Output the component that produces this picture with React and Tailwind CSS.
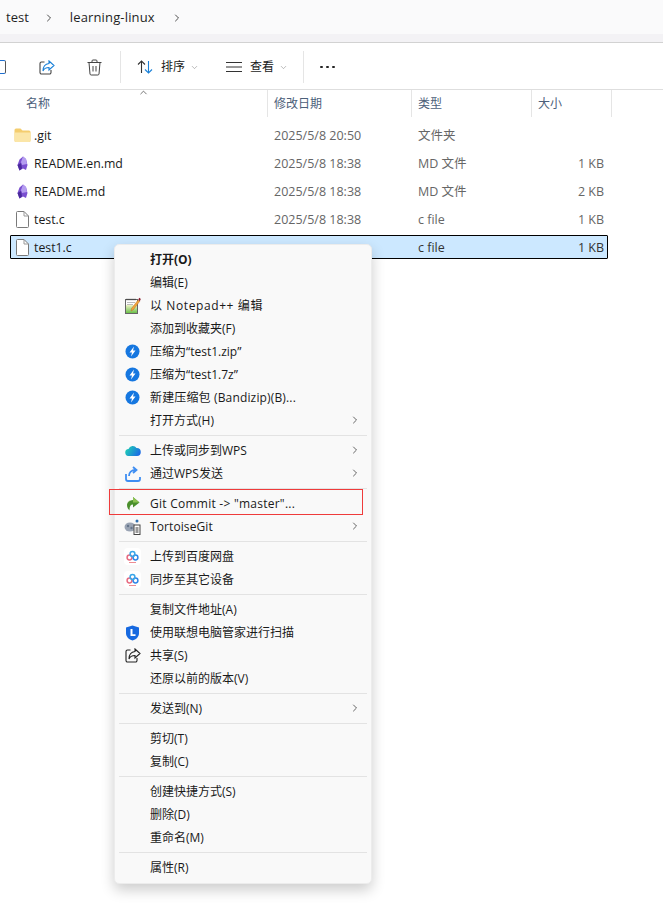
import React from 'react';
import { ChevronRight, ChevronDown, ChevronUp } from 'lucide-react';

const FONT = '"Open Sans", "Noto Sans CJK SC", sans-serif';

const FolderIcon = () => (
  <svg width="17" height="15" viewBox="0 0 17 15">
    <path d="M0.500 2a1.500 1.500 0 0 1 1.500-1.500h4.500l2 2H15a1.500 1.500 0 0 1 1.500 1.500v8.500a1.500 1.500 0 0 1-1.500 1.500H2a1.500 1.500 0 0 1-1.500-1.500z" fill="#f4cd6e" />
    <path d="M0.500 4.500h16v8a1.500 1.500 0 0 1-1.500 1.500H2a1.500 1.500 0 0 1-1.500-1.500z" fill="#fbe6a8" />
  </svg>
);

const ObsidianIcon = () => (
  <svg width="11" height="15" viewBox="0 0 11 15">
    <path d="M6 0.500 9 3l1.500 6-1.500 5L6 12.500 2.500 14.500 0.500 9 2.500 3.500z" fill="#7a4fd0" />
    <path d="M6 0.500 9 3l1 5-5 1-1-3z" fill="#b59df0" />
    <path d="M0.500 9 4 7l1 5.500-2.500 2z" fill="#4a2a9c" />
  </svg>
);

const FileIcon = () => (
  <svg width="13" height="17" viewBox="0 0 13 17">
    <path d="M0.500 1.500a1 1 0 0 1 1-1h6.500L12.500 5v10.500a1 1 0 0 1-1 1h-10a1 1 0 0 1-1-1z" fill="#fff" stroke="#7a7a7a" />
    <path d="M8 0.500V5h4.500" fill="none" stroke="#9a9a9a" />
  </svg>
);

const ShareOutline = ({ box = '#333', arrow = '#333' }) => (
  <svg width="16" height="15" viewBox="0 0 16 15" fill="none" strokeWidth="1.100">
    <path d="M5.500 2H2.500a1.500 1.500 0 0 0-1.500 1.500v9A1.500 1.500 0 0 0 2.500 14h8a1.500 1.500 0 0 0 1.500-1.500V10" stroke={box} />
    <path d="M10 1l5 4.500L10 10V7.500C7 7.500 5 8.500 4 11c0-4 2-7 6-7.500z" stroke={arrow} />
  </svg>
);

const TrashIcon = () => (
  <svg width="15" height="17" viewBox="0 0 15 17" fill="none" stroke="#444" strokeWidth="1">
    <path d="M0.500 3.500h14M5 3.500V2a1 1 0 0 1 1-1h3a1 1 0 0 1 1 1v1.500" />
    <path d="M2 3.500l1 11.500a1.200 1.200 0 0 0 1.200 1h6.600a1.200 1.200 0 0 0 1.200-1l1-11.500" />
    <path d="M6 7v5.500M9 7v5.500" />
  </svg>
);

const BandizipIcon = () => (
  <svg width="15" height="15" viewBox="0 0 15 15">
    <circle cx="7.500" cy="7.500" r="7" fill="#1677e0" />
    <path d="M9 2.500 4.500 8.500h2.500L6 12.500l4.500-6H8z" fill="#fff" />
  </svg>
);

const NotepadIcon = () => (
  <svg width="16" height="17" viewBox="0 0 16 17">
    <defs>
      <linearGradient id="npGreen" x1="0" x2="0" y1="0" y2="1">
        <stop offset="0" stopColor="#eef3c8" />
        <stop offset="1" stopColor="#6cc04a" />
      </linearGradient>
    </defs>
    <rect x="0.500" y="2.500" width="12" height="14" fill="#fff" stroke="#666" />
    <rect x="1" y="8" width="11" height="8" fill="url(#npGreen)" />
    <path d="M1.500 2.500h10" stroke="#333" strokeWidth="1.500" strokeDasharray="1 1" />
    <path d="M2 5.500h8M2 7.500h6" stroke="#bbb" />
    <path d="M13 3 6.500 11.500 6 14l2.300-1.200L14.800 4.300z" fill="#f2a33a" stroke="#a8621c" strokeWidth="0.400" />
    <path d="M13.300 2.600 14.300 0.800 15.800 2 14.800 4.300z" fill="#8a1c2c" />
  </svg>
);

const WpsCloudIcon = () => (
  <svg width="16" height="11" viewBox="0 0 16 11">
    <defs>
      <linearGradient id="wpsCloud" x1="0" x2="1" y1="0.300" y2="0.700">
        <stop offset="0" stopColor="#1fd0b4" />
        <stop offset="1" stopColor="#1a68e6" />
      </linearGradient>
    </defs>
    <path d="M4 11a3.500 3.500 0 0 1-.5-7A4.500 4.500 0 0 1 11.500 3 4 4 0 0 1 12 11z" fill="url(#wpsCloud)" />
  </svg>
);

const WpsSendIcon = () => (
  <svg width="16" height="16" viewBox="0 0 16 16" fill="none" stroke="#3f8ef2" strokeWidth="1.800">
    <path d="M1 8v5a2 2 0 0 0 2 2h10a2 2 0 0 0 2-2v-2" />
    <path d="M4 10c0-3.500 2.500-6 6.500-6M8 1l3.500 3L8 7" />
  </svg>
);

const GitCommitIcon = () => (
  <svg width="15" height="15" viewBox="0 0 15 15">
    <path d="M8 1l6.500 5.500L8 11.500V8.500C5.500 8.500 4.500 10.500 4.500 14.500 1 11 0.500 5 8 4z" fill="#4a8f2c" />
    <path d="M8 1l6.500 5.500H8V4C4.500 4.300 3 5.500 2 8 2.500 5.500 4.500 4 8 4z" fill="#8cc152" />
  </svg>
);

const TortoiseIcon = () => (
  <svg width="17" height="16" viewBox="0 0 17 16">
    <ellipse cx="6" cy="8" rx="5.500" ry="4.500" fill="#9aa4b4" />
    <circle cx="4" cy="7" r="1.200" fill="#64748b" />
    <circle cx="7.500" cy="9" r="1.200" fill="#64748b" />
    <rect x="10" y="6" width="6" height="9.500" fill="#fff" stroke="#444" />
    <path d="M11.500 9h3M11.500 11h3M11.500 13h3" stroke="#333" />
    <circle cx="13" cy="2" r="1.500" fill="#2f6fb0" />
  </svg>
);

const BaiduIcon = () => (
  <svg width="17" height="17" viewBox="0 0 17 17">
    <rect width="17" height="17" rx="4" fill="#ffffff" />
    <circle cx="5.500" cy="9.500" r="2.400" fill="none" stroke="#e86a80" strokeWidth="1.500" />
    <circle cx="11.500" cy="9.500" r="2.400" fill="none" stroke="#2f86e8" strokeWidth="1.500" />
    <circle cx="8.500" cy="6" r="2.400" fill="none" stroke="#3aa6e8" strokeWidth="1.500" />
    <path d="M5 14.500h7" stroke="#e8707a" strokeWidth="0.800" />
  </svg>
);

const LenovoIcon = () => (
  <svg width="15" height="16" viewBox="0 0 15 16">
    <path d="M7.500 0.500 14 2.500V8c0 4-3 6.500-6.500 7.500C4 14.500 1 12 1 8V2.500z" fill="#1769e0" />
    <path d="M5.500 4v7h5V9.300H7.500V4z" fill="#fff" />
  </svg>
);

const FILES = [
  { name: '.git', icon: <FolderIcon />, date: '2025/5/8 20:50', type: '文件夹', size: '' },
  { name: 'README.en.md', icon: <ObsidianIcon />, date: '2025/5/8 18:38', type: 'MD 文件', size: '1 KB' },
  { name: 'README.md', icon: <ObsidianIcon />, date: '2025/5/8 18:38', type: 'MD 文件', size: '2 KB' },
  { name: 'test.c', icon: <FileIcon />, date: '2025/5/8 18:38', type: 'c file', size: '1 KB' },
  // date cell sits under the context menu in the screenshot
  { name: 'test1.c', icon: <FileIcon />, date: '', type: 'c file', size: '1 KB', selected: true },
];

// null = separator
const MENU = [
  { label: '打开(O)', bold: true },
  { label: '编辑(E)' },
  { label: '以 Notepad++ 编辑', icon: <NotepadIcon />, track: 'tracking-[0.6px]' },
  { label: '添加到收藏夹(F)' },
  { label: '压缩为“test1.zip”', icon: <BandizipIcon /> },
  { label: '压缩为“test1.7z”', icon: <BandizipIcon /> },
  { label: '新建压缩包 (Bandizip)(B)...', icon: <BandizipIcon />, track: 'tracking-[0.15px]' },
  { label: '打开方式(H)', arrow: true },
  null,
  { label: '上传或同步到WPS', icon: <WpsCloudIcon />, arrow: true },
  { label: '通过WPS发送', icon: <WpsSendIcon />, arrow: true },
  null,
  { label: 'Git Commit -> "master"...', icon: <GitCommitIcon />, track: 'tracking-[0.25px]' },
  { label: 'TortoiseGit', icon: <TortoiseIcon />, arrow: true, track: 'tracking-[0.1px]' },
  null,
  { label: '上传到百度网盘', icon: <BaiduIcon /> },
  { label: '同步至其它设备', icon: <BaiduIcon /> },
  null,
  { label: '复制文件地址(A)' },
  { label: '使用联想电脑管家进行扫描', icon: <LenovoIcon /> },
  { label: '共享(S)', icon: <ShareOutline box="#222" arrow="#222" /> },
  { label: '还原以前的版本(V)' },
  null,
  { label: '发送到(N)', arrow: true },
  null,
  { label: '剪切(T)' },
  { label: '复制(C)' },
  null,
  { label: '创建快捷方式(S)' },
  { label: '删除(D)' },
  { label: '重命名(M)' },
  null,
  { label: '属性(R)' },
];

const MenuRow = ({ item }) => (
  <div className="relative flex h-[23px] items-center text-[12px] text-[#1a1a1a]">
    <div className="flex w-[35px] shrink-0 justify-center">{item.icon}</div>
    <span className={`${item.bold ? 'font-bold' : ''} ${item.track || ''}`}>{item.label}</span>
    {item.arrow && <ChevronRight className="absolute right-[10px] top-[5px] text-[#333]" size={12} strokeWidth={1.5} />}
  </div>
);

const ContextMenu = () => (
  <div className="absolute left-[114px] top-[244px] w-[258px] rounded-[5px] border border-[#ececec] bg-[#f9f9f9] pt-[3px] pb-[4px] shadow-[0_6px_14px_rgba(0,0,0,0.2)]">
    {MENU.map((item, i) =>
      item ? (
        <MenuRow key={i} item={item} />
      ) : (
        <div key={i} className="flex h-[7px] items-center px-[4px]">
          <div className="h-px w-full bg-[#e3e3e3]" />
        </div>
      )
    )}
  </div>
);

const FileRow = ({ file }) => {
  const meta = file.selected ? 'text-[#333]' : 'text-[#666]';
  return (
    <div className={`flex h-[24px] items-center rounded-[1px] text-[12.500px] ${file.selected ? 'border border-black bg-[#cce8ff]' : 'border border-transparent'}`}>
      <div className="flex w-[22px] shrink-0 justify-center">{file.icon}</div>
      <div className="ml-[1px] w-[240px] shrink-0 pt-[2px] text-[12.300px] text-[#1a1a1a]">{file.name}</div>
      <div className={`w-[144px] shrink-0 pt-[2px] ${meta}`}>{file.date}</div>
      <div className={`w-[120px] shrink-0 pt-[2px] ${meta}`}>{file.type}</div>
      <div className={`flex-1 pr-[3px] pt-[2px] text-right ${meta}`}>{file.size}</div>
    </div>
  );
};

export default function App() {
  return (
    <div className="relative h-[910px] w-[663px] overflow-hidden bg-white" style={{ fontFamily: FONT }}>
      {/* address bar */}
      <div className="flex h-[43px] flex-col border-b border-[#d2d2d2] bg-[#f3f2f5]">
        <div className="flex h-[34px] items-center gap-[15px] bg-[#fafafb] pl-[6px] pt-[2px] text-[13px] text-[#1f1f1f]">
          <span>test</span>
          <ChevronRight size={12} strokeWidth={1.6} className="-ml-[1px] text-[#222]" />
          <span className="tracking-[0.15px]">learning-linux</span>
          <ChevronRight size={12} strokeWidth={1.6} className="ml-[1px] text-[#222]" />
        </div>
      </div>

      {/* toolbar */}
      <div className="flex h-[47px] items-center border-b border-[#dedede] bg-white pt-[2px] text-[12px] text-[#1a1a1a]">
        <div className="flex h-[14px] w-[6px] rounded-r-[2px] border-y border-r border-y-[#1f6fd0] border-r-[#555]" />
        <div className="ml-[33px]"><ShareOutline box="#444" arrow="#1a80d8" /></div>
        <div className="ml-[32px]"><TrashIcon /></div>
        <div className="ml-[18px] h-[32px] w-px bg-[#e5e5e5]" />
        <svg width="16" height="14" viewBox="0 0 16 14" fill="none" strokeWidth="1.100" className="ml-[16px]">
          <path d="M4.500 13V1M1 4.500 4.500 1 8 4.500" stroke="#333" />
          <path d="M11.500 1v12M8 9.500l3.500 3.500L15 9.500" stroke="#1a80d8" />
        </svg>
        <span className="ml-[8px]">排序</span>
        <ChevronDown size={9} strokeWidth={1.5} className="ml-[5px] text-[#888]" />
        <svg width="16" height="10" viewBox="0 0 16 10" stroke="#333" strokeWidth="1" className="ml-[27px]">
          <path d="M0 0.500h16M0 5h16M0 9.500h16" />
        </svg>
        <span className="ml-[8px]">查看</span>
        <ChevronDown size={9} strokeWidth={1.5} className="ml-[5px] text-[#888]" />
        <div className="ml-[15px] h-[32px] w-px bg-[#e5e5e5]" />
        <div className="ml-[16px] flex gap-[3px]">
          <div className="h-[2px] w-[3px] rounded-full bg-[#222]" />
          <div className="h-[2px] w-[3px] rounded-full bg-[#222]" />
          <div className="h-[2px] w-[3px] rounded-full bg-[#222]" />
        </div>
      </div>

      {/* column headers */}
      <div className="relative flex h-[27px] items-center text-[12px] text-[#4c607a]">
        <ChevronUp size={11} strokeWidth={1.6} className="absolute left-[138px] top-[-3px] text-[#444]" />
        <div className="h-full w-[267px] pl-[26px] pt-[5px]">名称</div>
        <div className="h-full w-[144px] border-l border-[#e5e5e5] pl-[6px] pt-[5px]">修改日期</div>
        <div className="h-full w-[120px] border-l border-[#e5e5e5] pl-[6px] pt-[5px]">类型</div>
        <div className="h-full w-[81px] border-x border-[#e5e5e5] pl-[6px] pt-[5px]">大小</div>
      </div>

      {/* file list */}
      <div className="ml-[10px] mt-[6px] flex w-[598px] flex-col gap-[4px]">
        {FILES.map((f) => <FileRow key={f.name} file={f} />)}
      </div>

      <ContextMenu />
      <div className="absolute left-[109px] top-[489px] h-[26px] w-[254px] border border-[#ef3b3b]" />
    </div>
  );
}
